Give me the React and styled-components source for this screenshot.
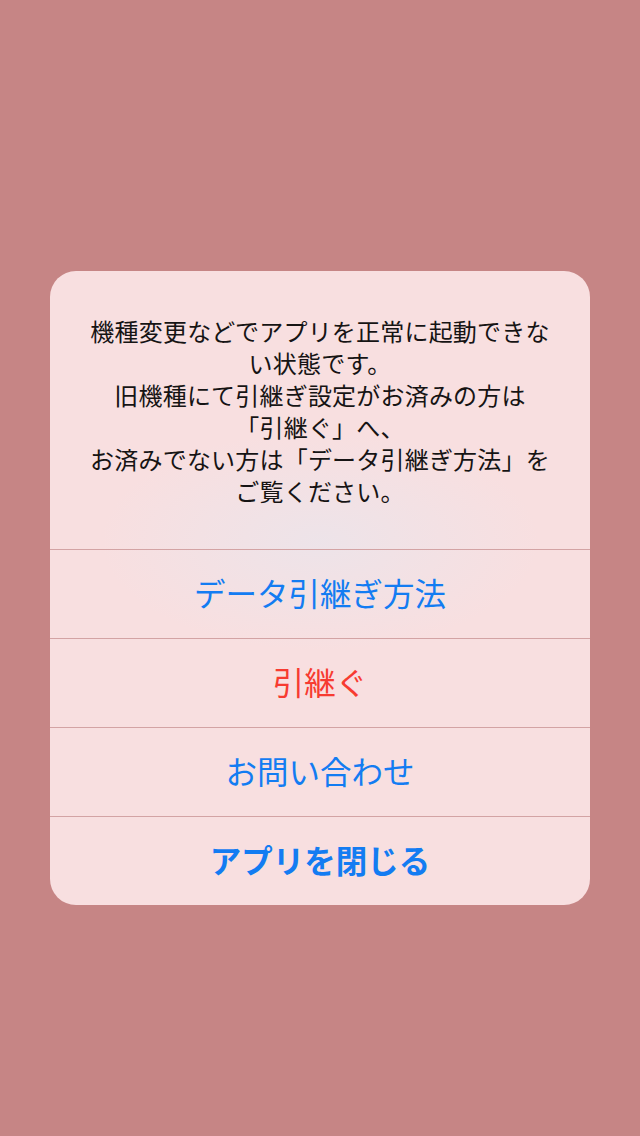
import React from 'react'
import styled, {createGlobalStyle} from 'styled-components'

const GlobalStyle = createGlobalStyle`
  html, body {
    margin: 0;
    padding: 0;
    background: #c68585;
  }
  body {
    font-family: "Noto Sans CJK JP", "Noto Sans", sans-serif;
  }
`

const Screen = styled.div`
  width: 640px;
  height: 1136px;
  display: flex;
  align-items: center;
  justify-content: center;
  background: #c68585;
`

const Alert = styled.div`
  width: 540px;
  margin-top: 40px;
  border-radius: 26px;
  overflow: hidden;
  background:
    radial-gradient(ellipse 220px 110px at 50% 270px, rgba(236, 228, 234, 0.9) 0%, rgba(248, 223, 224, 0) 100%),
    #f8dfe0;
  display: flex;
  flex-direction: column;
`

const Message = styled.div`
  padding: 44px 24px 42px;
  text-align: center;
  font-size: 24px;
  line-height: 32px;
  color: #161414;
  letter-spacing: 0.2px;
`

const Action = styled.div`
  height: 89px;
  padding-bottom: 5px;
  box-sizing: border-box;
  border-top: 1px solid #d3a3a4;
  display: flex;
  align-items: center;
  justify-content: center;
  font-size: 31.5px;
  font-weight: ${p => (p.$bold ? 700 : 400)};
  color: ${p => (p.$destructive ? '#f73b31' : '#137cf2')};
`

const lines = [
  '機種変更などでアプリを正常に起動できな',
  'い状態です。',
  '旧機種にて引継ぎ設定がお済みの方は',
  '「引継ぐ」へ、',
  'お済みでない方は「データ引継ぎ方法」を',
  'ご覧ください。',
]

const App = () => (
  <Screen>
    <GlobalStyle />
    <Alert>
      <Message>
        {lines.map((l, i) => (
          <div key={i}>{l}</div>
        ))}
      </Message>
      <Action>データ引継ぎ方法</Action>
      <Action $destructive>引継ぐ</Action>
      <Action>お問い合わせ</Action>
      <Action $bold>アプリを閉じる</Action>
    </Alert>
  </Screen>
)

export default App
